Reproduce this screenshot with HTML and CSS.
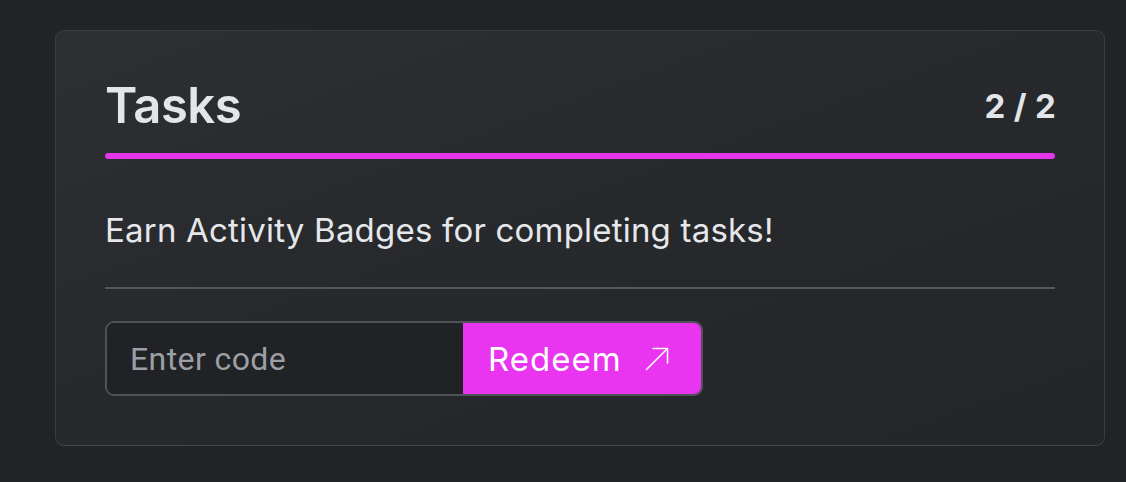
FILE: index.html
```html
<!DOCTYPE html>
<html lang="en">
<head>
<meta charset="utf-8">
<title>Tasks</title>
<link rel="stylesheet" href="styles.css">
</head>
<body>
<main class="page">
  <section class="card">
    <header class="card-header">
      <h1 class="title">Tasks</h1>
      <span class="count">2 / 2</span>
    </header>
    <div class="progress"></div>
    <p class="desc">Earn Activity Badges for completing tasks!</p>
    <hr class="divider">
    <form class="redeem">
      <input class="code-input" type="text" placeholder="Enter code">
      <button class="redeem-btn" type="button">
        <span class="redeem-label">Redeem</span>
        <svg class="arrow" width="24" height="24" viewBox="0 0 24 24" fill="none" stroke="currentColor" stroke-width="1.6" stroke-linecap="round" stroke-linejoin="round"><path d="M1.5 22.5 L22.5 1.5 M8 1.5 H22.5 V16"/></svg>
      </button>
    </form>
  </section>
</main>
</body>
</html>
```

FILE: styles.css
```css
* { box-sizing: border-box; }
html, body { margin: 0; padding: 0; }
body {
  background: #212327;
  font-family: "Inter", "Noto Sans", sans-serif;
  color: #e5e7eb;
  width: 1126px;
  height: 482px;
  overflow: hidden;
}
.page {
  padding: 30px 21px 0 55px;
}
.card {
  width: 1050px;
  border: 1px solid #3a3c41;
  border-bottom-color: #45474c;
  border-radius: 9px;
  background: linear-gradient(160deg, #2d2f33 0%, #27292d 45%, #232629 100%);
  padding: 50px 49px 49px 49px;
}
.card-header {
  display: flex;
  justify-content: space-between;
  align-items: center;
  height: 50px;
}
.title {
  margin: 0;
  font-size: 49px;
  line-height: 50px;
  font-weight: 600;
  color: #e3e5e9;
  letter-spacing: -0.5px;
}
.count {
  font-size: 33px;
  line-height: 40px;
  font-weight: 700;
  color: #e3e5e9;
  letter-spacing: 0.3px;
  margin-right: -1px;
}
.progress {
  margin-top: 22px;
  height: 6px;
  border-radius: 3px;
  background: #e535e9;
}
.desc {
  margin: 51px 0 0;
  font-size: 33px;
  line-height: 40px;
  font-weight: 400;
  color: #e5e7eb;
  letter-spacing: 0.2px;
}
.divider {
  margin: 37px 0 0;
  border: 0;
  height: 2px;
  background: #55575c;
}
.redeem {
  margin-top: 32px;
  display: flex;
  width: 598px;
  height: 75px;
  border: 2px solid #4f5256;
  border-radius: 9px;
  overflow: hidden;
}
.code-input {
  width: 356px;
  flex: none;
  border: 0;
  outline: 0;
  background: #202226;
  padding: 0 0 0 23px;
  font-family: "Roboto", "Liberation Sans", sans-serif;
  font-size: 32px;
  letter-spacing: 0.4px;
  color: #e5e7eb;
}
.code-input::placeholder { color: #9c9fa4; }
.redeem-btn {
  flex: 1;
  display: flex;
  align-items: center;
  gap: 23px;
  border: 0;
  background: #e935f0;
  color: #ffffff;
  padding: 0 0 0 25px;
  font-family: "Inter", "Noto Sans", sans-serif;
  font-size: 33px;
  font-weight: 400;
  cursor: pointer;
}
.redeem-label { letter-spacing: 1px; }
.arrow { flex: none; }
```
